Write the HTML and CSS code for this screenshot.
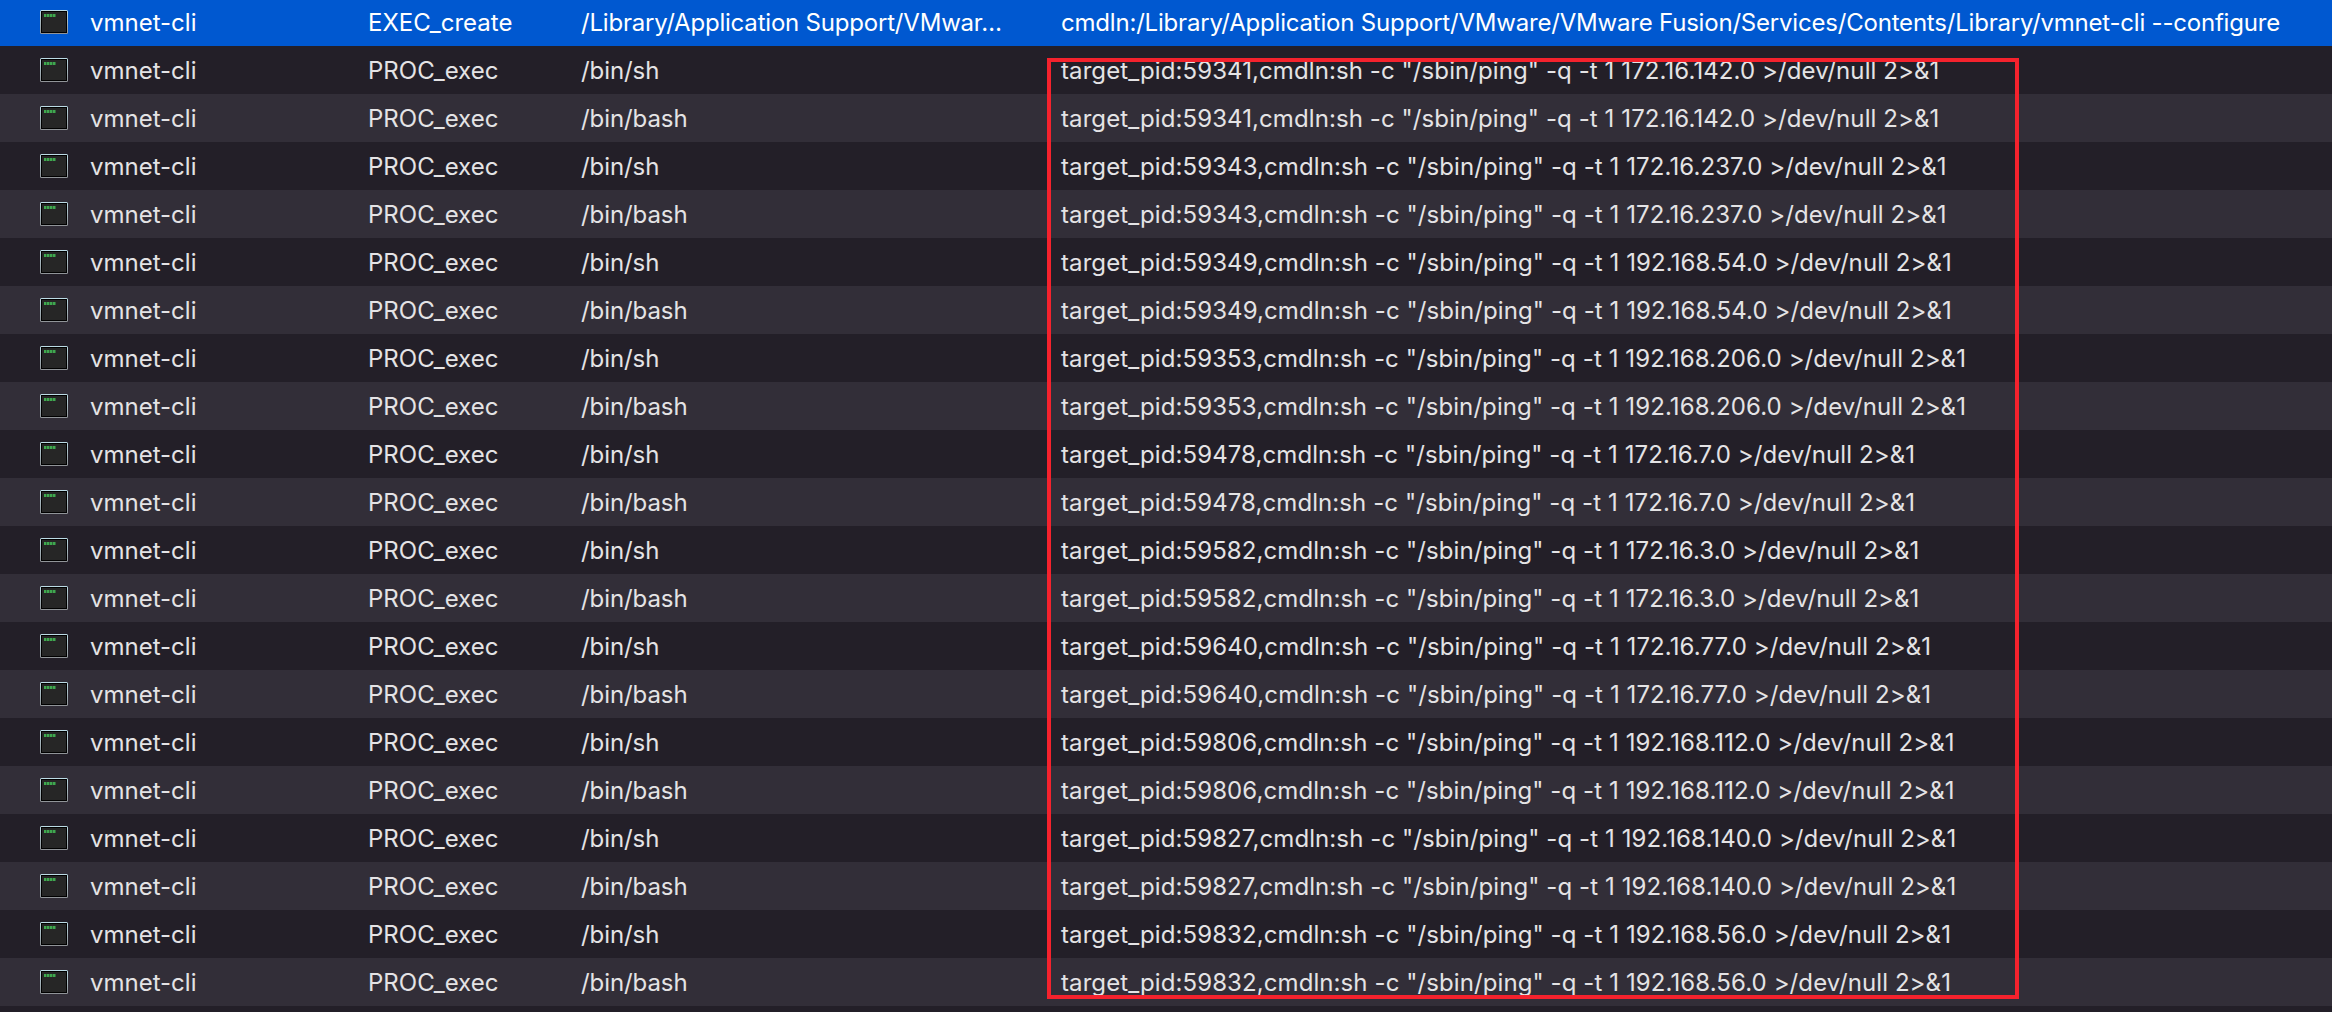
FILE: index.html
```html
<!DOCTYPE html>
<html lang="en">
<head>
<meta charset="utf-8">
<title>Events</title>
<link rel="stylesheet" href="styles.css">
</head>
<body>
<svg class="defs" width="0" height="0" aria-hidden="true">
  <defs>
    <linearGradient id="edge" x1="0" y1="0" x2="0" y2="1">
      <stop offset="0" stop-color="#bcdce6"/>
      <stop offset="1" stop-color="#8f9296"/>
    </linearGradient>
    <symbol id="term" viewBox="0 0 28 24">
      <rect x="0" y="0" width="28" height="24" rx="1.5" fill="url(#edge)"/>
      <rect x="1" y="1" width="26" height="22" fill="#000"/>
      <rect x="2" y="2" width="24" height="20" fill="#262626"/>
      <g fill="#3fa84f">
        <rect x="4" y="4" width="2.5" height="3"/>
        <rect x="7" y="4" width="2.5" height="3"/>
        <rect x="10" y="4" width="2.5" height="3"/>
        <rect x="13" y="4" width="2.5" height="3"/>
      </g>
    </symbol>
  </defs>
</svg>
<main class="table">
  <div class="row selected"><svg class="icon"><use href="#term"/></svg><span>vmnet-cli</span><span>EXEC_create</span><span class="path">/Library/Application Support/VMwar…</span><span class="detail">cmdln:/Library/Application Support/VMware/VMware Fusion/Services/Contents/Library/vmnet-cli --configure</span></div>
  <div class="row"><svg class="icon"><use href="#term"/></svg><span>vmnet-cli</span><span>PROC_exec</span><span class="path">/bin/sh</span><span class="detail">target_pid:59341,cmdln:sh -c "/sbin/ping" -q -t 1 172.16.142.0 &gt;/dev/null 2&gt;&amp;1</span></div>
  <div class="row"><svg class="icon"><use href="#term"/></svg><span>vmnet-cli</span><span>PROC_exec</span><span class="path">/bin/bash</span><span class="detail">target_pid:59341,cmdln:sh -c "/sbin/ping" -q -t 1 172.16.142.0 &gt;/dev/null 2&gt;&amp;1</span></div>
  <div class="row"><svg class="icon"><use href="#term"/></svg><span>vmnet-cli</span><span>PROC_exec</span><span class="path">/bin/sh</span><span class="detail">target_pid:59343,cmdln:sh -c "/sbin/ping" -q -t 1 172.16.237.0 &gt;/dev/null 2&gt;&amp;1</span></div>
  <div class="row"><svg class="icon"><use href="#term"/></svg><span>vmnet-cli</span><span>PROC_exec</span><span class="path">/bin/bash</span><span class="detail">target_pid:59343,cmdln:sh -c "/sbin/ping" -q -t 1 172.16.237.0 &gt;/dev/null 2&gt;&amp;1</span></div>
  <div class="row"><svg class="icon"><use href="#term"/></svg><span>vmnet-cli</span><span>PROC_exec</span><span class="path">/bin/sh</span><span class="detail">target_pid:59349,cmdln:sh -c "/sbin/ping" -q -t 1 192.168.54.0 &gt;/dev/null 2&gt;&amp;1</span></div>
  <div class="row"><svg class="icon"><use href="#term"/></svg><span>vmnet-cli</span><span>PROC_exec</span><span class="path">/bin/bash</span><span class="detail">target_pid:59349,cmdln:sh -c "/sbin/ping" -q -t 1 192.168.54.0 &gt;/dev/null 2&gt;&amp;1</span></div>
  <div class="row"><svg class="icon"><use href="#term"/></svg><span>vmnet-cli</span><span>PROC_exec</span><span class="path">/bin/sh</span><span class="detail">target_pid:59353,cmdln:sh -c "/sbin/ping" -q -t 1 192.168.206.0 &gt;/dev/null 2&gt;&amp;1</span></div>
  <div class="row"><svg class="icon"><use href="#term"/></svg><span>vmnet-cli</span><span>PROC_exec</span><span class="path">/bin/bash</span><span class="detail">target_pid:59353,cmdln:sh -c "/sbin/ping" -q -t 1 192.168.206.0 &gt;/dev/null 2&gt;&amp;1</span></div>
  <div class="row"><svg class="icon"><use href="#term"/></svg><span>vmnet-cli</span><span>PROC_exec</span><span class="path">/bin/sh</span><span class="detail">target_pid:59478,cmdln:sh -c "/sbin/ping" -q -t 1 172.16.7.0 &gt;/dev/null 2&gt;&amp;1</span></div>
  <div class="row"><svg class="icon"><use href="#term"/></svg><span>vmnet-cli</span><span>PROC_exec</span><span class="path">/bin/bash</span><span class="detail">target_pid:59478,cmdln:sh -c "/sbin/ping" -q -t 1 172.16.7.0 &gt;/dev/null 2&gt;&amp;1</span></div>
  <div class="row"><svg class="icon"><use href="#term"/></svg><span>vmnet-cli</span><span>PROC_exec</span><span class="path">/bin/sh</span><span class="detail">target_pid:59582,cmdln:sh -c "/sbin/ping" -q -t 1 172.16.3.0 &gt;/dev/null 2&gt;&amp;1</span></div>
  <div class="row"><svg class="icon"><use href="#term"/></svg><span>vmnet-cli</span><span>PROC_exec</span><span class="path">/bin/bash</span><span class="detail">target_pid:59582,cmdln:sh -c "/sbin/ping" -q -t 1 172.16.3.0 &gt;/dev/null 2&gt;&amp;1</span></div>
  <div class="row"><svg class="icon"><use href="#term"/></svg><span>vmnet-cli</span><span>PROC_exec</span><span class="path">/bin/sh</span><span class="detail">target_pid:59640,cmdln:sh -c "/sbin/ping" -q -t 1 172.16.77.0 &gt;/dev/null 2&gt;&amp;1</span></div>
  <div class="row"><svg class="icon"><use href="#term"/></svg><span>vmnet-cli</span><span>PROC_exec</span><span class="path">/bin/bash</span><span class="detail">target_pid:59640,cmdln:sh -c "/sbin/ping" -q -t 1 172.16.77.0 &gt;/dev/null 2&gt;&amp;1</span></div>
  <div class="row"><svg class="icon"><use href="#term"/></svg><span>vmnet-cli</span><span>PROC_exec</span><span class="path">/bin/sh</span><span class="detail">target_pid:59806,cmdln:sh -c "/sbin/ping" -q -t 1 192.168.112.0 &gt;/dev/null 2&gt;&amp;1</span></div>
  <div class="row"><svg class="icon"><use href="#term"/></svg><span>vmnet-cli</span><span>PROC_exec</span><span class="path">/bin/bash</span><span class="detail">target_pid:59806,cmdln:sh -c "/sbin/ping" -q -t 1 192.168.112.0 &gt;/dev/null 2&gt;&amp;1</span></div>
  <div class="row"><svg class="icon"><use href="#term"/></svg><span>vmnet-cli</span><span>PROC_exec</span><span class="path">/bin/sh</span><span class="detail">target_pid:59827,cmdln:sh -c "/sbin/ping" -q -t 1 192.168.140.0 &gt;/dev/null 2&gt;&amp;1</span></div>
  <div class="row"><svg class="icon"><use href="#term"/></svg><span>vmnet-cli</span><span>PROC_exec</span><span class="path">/bin/bash</span><span class="detail">target_pid:59827,cmdln:sh -c "/sbin/ping" -q -t 1 192.168.140.0 &gt;/dev/null 2&gt;&amp;1</span></div>
  <div class="row"><svg class="icon"><use href="#term"/></svg><span>vmnet-cli</span><span>PROC_exec</span><span class="path">/bin/sh</span><span class="detail">target_pid:59832,cmdln:sh -c "/sbin/ping" -q -t 1 192.168.56.0 &gt;/dev/null 2&gt;&amp;1</span></div>
  <div class="row"><svg class="icon"><use href="#term"/></svg><span>vmnet-cli</span><span>PROC_exec</span><span class="path">/bin/bash</span><span class="detail">target_pid:59832,cmdln:sh -c "/sbin/ping" -q -t 1 192.168.56.0 &gt;/dev/null 2&gt;&amp;1</span></div>
  <div class="highlight"></div>
</main>
</body>
</html>
```
FILE: styles.css
```css
html, body {
  margin: 0;
  height: 100%;
  overflow: hidden;
  background: #231f28;
}

.defs {
  position: absolute;
}

.table {
  position: relative;
  margin-top: -2px;
  font-family: Inter, "Liberation Sans", sans-serif;
  font-size: 24px;
  color: #e4e3e5;
}

.row {
  display: grid;
  grid-template-columns: 50px 278px 213px 480px 1fr;
  align-items: center;
  height: 48px;
  padding-left: 40px;
  white-space: nowrap;
  background: #231f28;
}

.row:nth-child(odd) {
  background: #322e38;
}

.row.selected {
  background: #0058d0;
  color: #fff;
}

.path {
  letter-spacing: -0.08px;
}

.detail {
  letter-spacing: 0.09px;
}

.selected .path,
.selected .detail {
  letter-spacing: -0.2px;
}

.icon {
  display: block;
  width: 28px;
  height: 24px;
}

.highlight {
  position: absolute;
  left: 1047px;
  top: 60px;
  width: 972px;
  height: 941px;
  box-sizing: border-box;
  border: 4px solid #f5222d;
}
```
